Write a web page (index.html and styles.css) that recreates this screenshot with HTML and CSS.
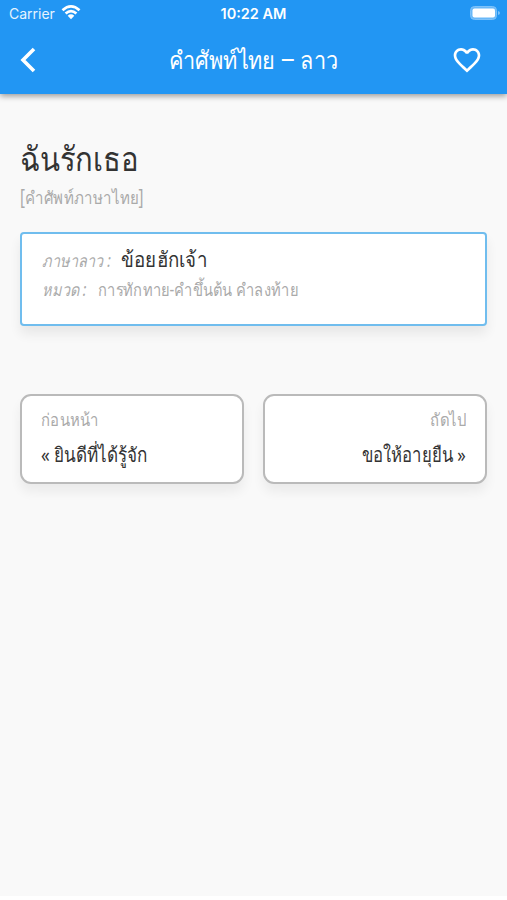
FILE: index.html
```html
<!DOCTYPE html>
<html lang="th">
<head>
<meta charset="utf-8">
<title>คำศัพท์ไทย – ลาว</title>
<link rel="stylesheet" href="styles.css">
</head>
<body>
<header class="header">
  <div class="status">
    <div class="carrier"><span>Carrier</span>
      <svg width="20" height="15" viewBox="0 0 20 15" fill="none" stroke="#fff" stroke-width="2.7"><path d="M1.500 5.300Q10-2.400 18.500 5.300M4.600 8.600Q10 3.700 15.400 8.600"/><path d="M6.700 10.800Q10 7.900 13.300 10.800L10 14.200Z" fill="#fff" stroke="none"/></svg>
    </div>
    <div class="time">10:22 AM</div>
    <svg class="battery" width="31" height="14" viewBox="0 0 31 14"><rect x=".5" y=".5" width="26" height="13" rx="4" fill="#69b8f8" stroke="#7ec2f9"/><rect x="2.500" y="2.500" width="22.500" height="9" rx="2" fill="#fff"/><path d="M28 5q2 .5 2 2t-2 2z" fill="#7ec2f9"/></svg>
  </div>
  <div class="bar">
    <svg class="back" width="16" height="26" viewBox="0 0 16 26" fill="none" stroke="#fff" stroke-width="3.600"><path d="M14 2L3 13L14 24"/></svg>
    <h1 class="title">คำศัพท์ไทย <span class="dash">–</span> ลาว</h1>
    <svg class="heart" width="32" height="32" viewBox="0 0 24 24" fill="#fff"><path d="M16.500 3c-1.740 0-3.410.81-4.500 2.090C10.910 3.810 9.240 3 7.500 3 4.420 3 2 5.420 2 8.500c0 3.780 3.400 6.860 8.550 11.540L12 21.350l1.450-1.320C18.600 15.360 22 12.280 22 8.500 22 5.420 19.580 3 16.500 3zm-4.400 15.550l-.1.100-.1-.1C7.140 14.240 4 11.390 4 8.500 4 6.500 5.500 5 7.500 5c1.540 0 3.040.99 3.570 2.360h1.870C13.460 5.990 14.960 5 16.500 5c2 0 3.500 1.500 3.500 3.500 0 2.890-3.140 5.740-7.900 10.050z"/></svg>
  </div>
</header>
<main class="content">
  <h2 class="word">ฉันรักเธอ</h2>
  <p class="kind"><span class="bracket">[</span>คำศัพท์ภาษาไทย<span class="bracket">]</span></p>
  <section class="card">
    <div class="row lao"><span class="label">ภาษาลาว :</span><span class="translation">ข้อยฮักเจ้า</span></div>
    <div class="row group"><span class="label">หมวด :</span><span class="category">การทักทาย-คำขึ้นต้น คำลงท้าย</span></div>
  </section>
  <nav class="nav">
    <a class="link"><span class="hint">ก่อนหน้า</span><span class="target">« ยินดีที่ได้รู้จัก</span></a>
    <a class="link next-link"><span class="hint">ถัดไป</span><span class="target next">ขอให้อายุยืน »</span></a>
  </nav>
</main>
</body>
</html>
```
FILE: styles.css
```css
* { box-sizing: border-box; }
body { margin: 0; height: 900px; background: #fff; font-family: "Noto Sans", sans-serif; overflow: hidden; }
h1, h2, p { margin: 0; font-weight: 400; white-space: nowrap; }
.header { position: relative; height: 94px; background: #2296f3; color: #fff; box-shadow: 0 2px 6px rgba(0,0,0,.4); }
.status { height: 28px; display: grid; grid-template-columns: 1fr auto 1fr; align-items: center; padding: 0 6px 0 9px; font-family: Inter, sans-serif; font-size: 14px; }
.carrier { display: flex; align-items: center; gap: 6px; color: #e5f3fe; margin-top: -2px; }
.carrier svg { margin-top: -1px; }
.time { font-weight: 600; font-size: 14.500px; margin: -1px 3px 0 0; }
.battery { justify-self: end; margin-top: -2px; }
.bar { height: 64px; display: grid; grid-template-columns: 40px 1fr 40px; align-items: center; padding: 0 20px; }
.back { margin-top: -1px; }
.title { font-size: 24.500px; line-height: 36px; text-align: center; transform: scaleX(.885); }
.dash { display: inline-block; transform: translateY(-2px) scaleX(1.3); margin: 0 2px; }
.heart { margin: -1px 0 0 -1px; justify-self: center; }
.content { height: 802px; padding: 39px 20px 0; background: #f9f9f9; }
.word, .kind, .label, .translation, .category, .hint, .target { transform-origin: left center; }
.word { height: 52px; line-height: 50px; font-size: 34px; color: #333; transform: scaleX(.86); }
.kind { height: 24px; line-height: 24px; font-size: 17.500px; color: #aaa; transform: scaleX(.86); }
.bracket { display: inline-block; transform: scaleY(1.2); }
.card { height: 94px; margin-top: 23px; padding: 9px 20px; background: #fff; border: 2px solid #70bdee; border-radius: 4px; box-shadow: 0 8px 12px rgba(0,0,0,.07); }
.row { display: flex; height: 31px; line-height: 31px; align-items: baseline; white-space: nowrap; color: #aaa; font-size: 17.500px; }
.label { font-style: italic; transform: scaleX(.82); }
.lao .label { margin-right: -5px; }
.group .label { margin-right: 2px; }
.translation { color: #333; font-size: 21.500px; transform: scaleX(.87); }
.category { transform: scaleX(.84); }
.nav { display: grid; grid-template-columns: 1fr 1fr; gap: 19px; margin-top: 68px; }
.link { height: 90px; display: flex; flex-direction: column; align-items: flex-start; padding: 7px 19px; background: #fff; border: 2px solid #bababa; border-radius: 11px; box-shadow: 0 8px 12px rgba(0,0,0,.06); white-space: nowrap; }
.next-link { align-items: flex-end; }
.next-link span { transform-origin: right center; }
.hint { height: 33px; line-height: 32px; font-size: 17.500px; color: #aaa; transform: scaleX(.85); }
.target { height: 36px; line-height: 36px; font-size: 20.500px; color: #333; transform: scaleX(.835); }
.next { transform: scaleX(.815); }
```
